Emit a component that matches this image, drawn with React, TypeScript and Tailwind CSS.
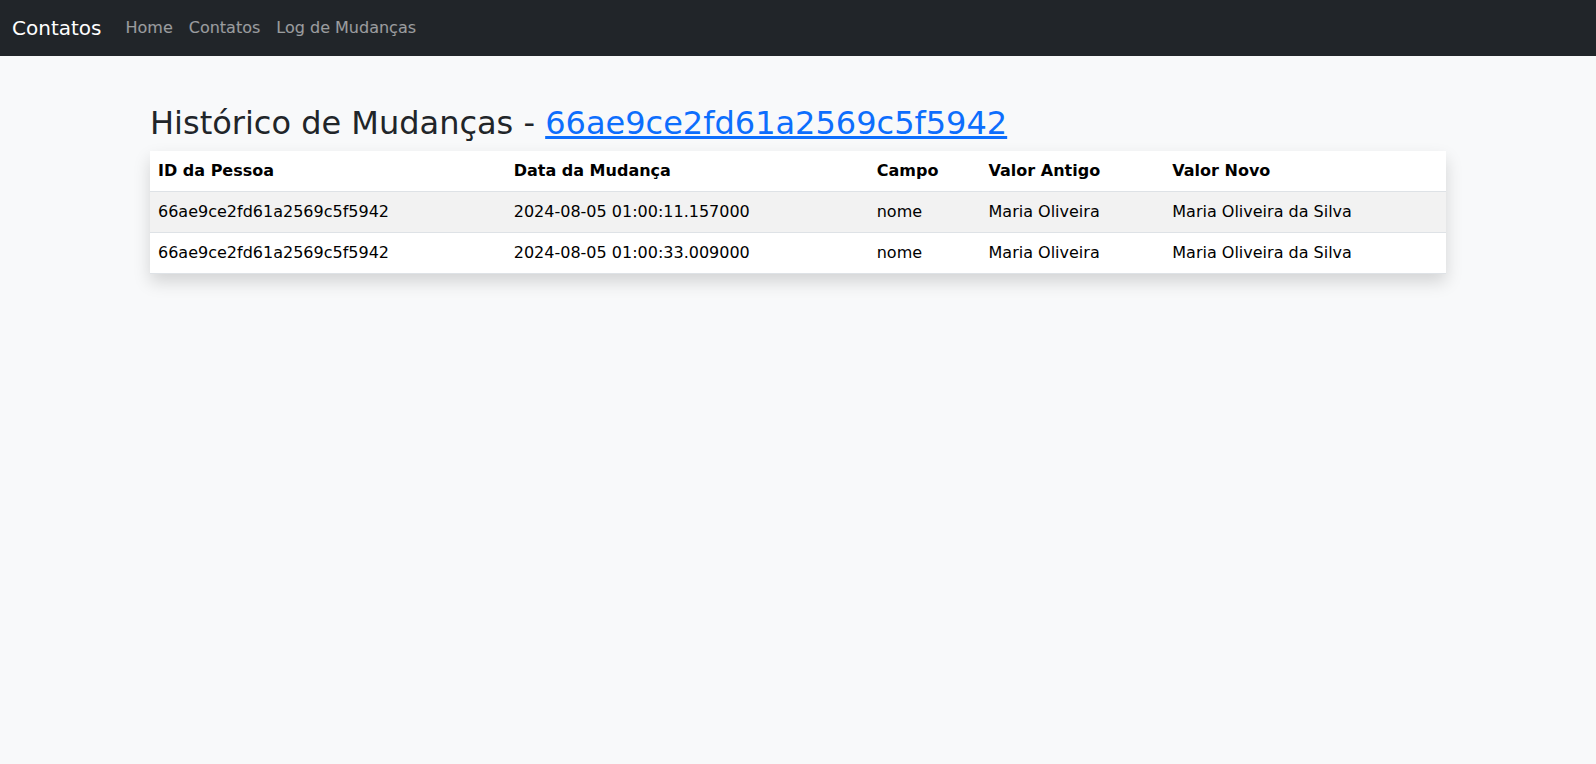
import React from "react";

const rows = [
  ["66ae9ce2fd61a2569c5f5942", "2024-08-05 01:00:11.157000", "nome", "Maria Oliveira", "Maria Oliveira da Silva"],
  ["66ae9ce2fd61a2569c5f5942", "2024-08-05 01:00:33.009000", "nome", "Maria Oliveira", "Maria Oliveira da Silva"],
];

export default function App() {
  return (
    <div className="min-h-[764px] bg-[#f8f9fa] text-[#212529] text-[16px] leading-[24px]" style={{ fontFamily: '"DejaVu Sans", sans-serif' }}>
      <nav className="bg-[#212529] py-2 px-3">
        <div className="flex items-center">
          <a className="block text-white text-[20px] leading-[30px] py-[5px] mr-4">Contatos</a>
          <div className="flex items-center">
            <a className="block text-white/55 px-2 py-2 leading-[24px]">Home</a>
            <a className="block text-white/55 px-2 py-2 leading-[24px]">Contatos</a>
            <a className="block text-white/55 px-2 py-2 leading-[24px]">Log de Mudanças</a>
          </div>
        </div>
      </nav>
      <div className="max-w-[1320px] mx-auto px-3 pt-12">
        <h2 className="text-[32px] leading-[39px] font-medium mb-2 text-[#212529]">
          Histórico de Mudanças - <a className="text-[#0d6efd] underline">66ae9ce2fd61a2569c5f5942</a>
        </h2>
        <table className="w-full bg-white shadow-[0_8px_16px_rgba(0,0,0,0.15)] border-collapse text-black mb-4">
          <thead>
            <tr className="border-b border-[#dee2e6]">
              <th className="text-left font-bold px-2 py-2">ID da Pessoa</th>
              <th className="text-left font-bold px-2 py-2">Data da Mudança</th>
              <th className="text-left font-bold px-2 py-2">Campo</th>
              <th className="text-left font-bold px-2 py-2">Valor Antigo</th>
              <th className="text-left font-bold px-2 py-2">Valor Novo</th>
            </tr>
          </thead>
          <tbody>
            {rows.map((r, i) => (
              <tr key={i} className={`border-b border-[#dee2e6] ${i % 2 === 0 ? "bg-[#f2f2f2]" : "bg-white"}`}>
                {r.map((c, j) => (
                  <td key={j} className="px-2 py-2">{c}</td>
                ))}
              </tr>
            ))}
          </tbody>
        </table>
      </div>
    </div>
  );
}
